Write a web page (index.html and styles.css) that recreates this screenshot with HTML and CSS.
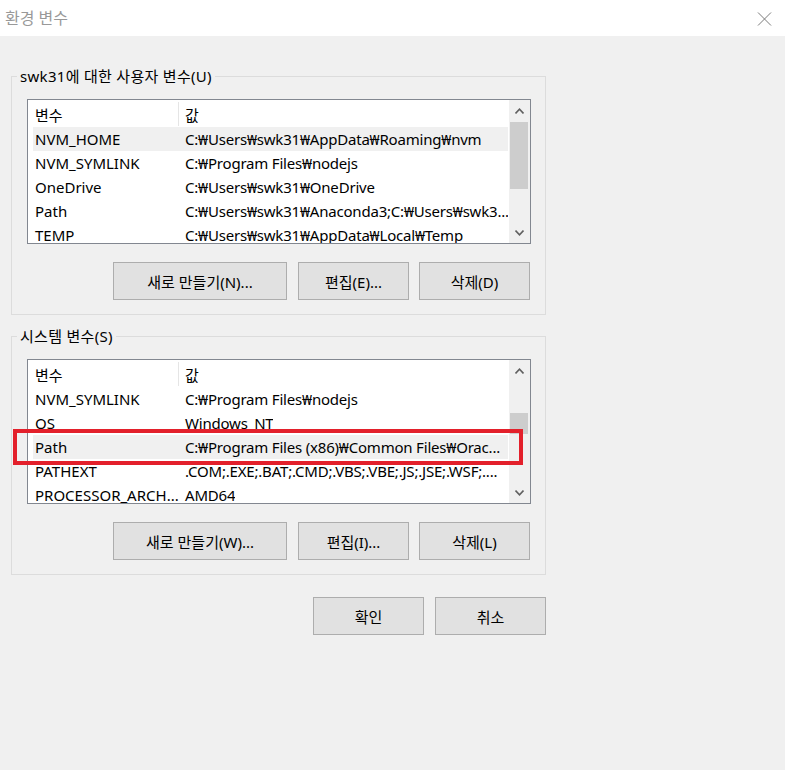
FILE: index.html
```
<!DOCTYPE HTML>
<html>
	<head>
		<meta http-equiv="Content-Type" content="text/html; charset=UTF-8" />
		<title>환경 변수</title>
		<link rel="stylesheet" href="styles.css">
	</head>
	<body>
		<div class="title_bar">
			<span class="title">환경 변수</span>
			<svg class="close" width="15" height="14" viewBox="0 0 15 14">
				<path d="M1 0.5 L14 13.5 M14 0.5 L1 13.5" stroke="#7a7a7a" stroke-width="1" fill="none"/>
			</svg>
		</div>
		<div class="dialog">
			<fieldset class="group">
				<legend>swk31에 대한 사용자 변수(U)</legend>
				<div class="group_body">
					<div class="list">
						<div class="rows">
							<div class="row row--head"><span class="c1">변수</span><span class="c2">값</span></div>
							<div class="row row--hover"><span class="c1">NVM_HOME</span><span class="c2">C:₩Users₩swk31₩AppData₩Roaming₩nvm</span></div>
							<div class="row"><span class="c1">NVM_SYMLINK</span><span class="c2">C:₩Program Files₩nodejs</span></div>
							<div class="row"><span class="c1">OneDrive</span><span class="c2">C:₩Users₩swk31₩OneDrive</span></div>
							<div class="row"><span class="c1">Path</span><span class="c2">C:₩Users₩swk31₩Anaconda3;C:₩Users₩swk3...</span></div>
							<div class="row"><span class="c1">TEMP</span><span class="c2">C:₩Users₩swk31₩AppData₩Local₩Temp</span></div>
						</div>
						<div class="scrollbar">
							<div class="arrow"><svg width="9" height="6" viewBox="0 0 9 6"><path d="M0.5 5.5 L4.5 1.2 L8.5 5.5" stroke="#606060" stroke-width="1.6" fill="none"/></svg></div>
							<div class="track"><div class="thumb thumb--user"></div></div>
							<div class="arrow"><svg width="9" height="6" viewBox="0 0 9 6"><path d="M0.5 0.5 L4.5 4.8 L8.5 0.5" stroke="#606060" stroke-width="1.6" fill="none"/></svg></div>
						</div>
					</div>
					<div class="buttons">
						<div class="btn btn--wide">새로 만들기(N)...</div>
						<div class="btn">편집(E)...</div>
						<div class="btn">삭제(D)</div>
					</div>
				</div>
			</fieldset>

			<fieldset class="group group--system">
				<legend>시스템 변수(S)</legend>
				<div class="group_body">
					<div class="list">
						<div class="rows">
							<div class="row row--head"><span class="c1">변수</span><span class="c2">값</span></div>
							<div class="row"><span class="c1">NVM_SYMLINK</span><span class="c2">C:₩Program Files₩nodejs</span></div>
							<div class="row"><span class="c1">OS</span><span class="c2">Windows_NT</span></div>
							<div class="row row--hover"><span class="c1">Path</span><span class="c2">C:₩Program Files (x86)₩Common Files₩Orac...</span></div>
							<div class="row"><span class="c1">PATHEXT</span><span class="c2">.COM;.EXE;.BAT;.CMD;.VBS;.VBE;.JS;.JSE;.WSF;....</span></div>
							<div class="row"><span class="c1">PROCESSOR_ARCH...</span><span class="c2">AMD64</span></div>
						</div>
						<div class="scrollbar">
							<div class="arrow"><svg width="9" height="6" viewBox="0 0 9 6"><path d="M0.5 5.5 L4.5 1.2 L8.5 5.5" stroke="#606060" stroke-width="1.6" fill="none"/></svg></div>
							<div class="track"><div class="thumb thumb--system"></div></div>
							<div class="arrow"><svg width="9" height="6" viewBox="0 0 9 6"><path d="M0.5 0.5 L4.5 4.8 L8.5 0.5" stroke="#606060" stroke-width="1.6" fill="none"/></svg></div>
						</div>
						<!-- annotation round the Path row -->
						<div class="mark"></div>
					</div>
					<div class="buttons">
						<div class="btn btn--wide">새로 만들기(W)...</div>
						<div class="btn">편집(I)...</div>
						<div class="btn">삭제(L)</div>
					</div>
				</div>
			</fieldset>

			<div class="buttons buttons--dialog">
				<div class="btn">확인</div>
				<div class="btn">취소</div>
			</div>
		</div>
	</body>
</html>
```

FILE: styles.css
```
body {
	margin: 0;
	background: #f0f0f0;
	font-family: "Noto Sans", "Noto Sans CJK KR", sans-serif;
	font-size: 15px;
	color: #000;
}
.title_bar {
	height: 36px;
	background: #fff;
	display: flex;
	align-items: center;
	justify-content: space-between;
	padding: 0 13px 0 5px;
}
.title {
	color: #999;
	font-size: 16px;
	line-height: 20px;
}
.close {
	display: block;
	margin-top: 1px;
}
.dialog {
	padding-left: 11px;
}
.group {
	box-sizing: border-box;
	width: 535px;
	margin: 29px 0 0 0;
	padding: 0;
	min-width: 0;
	border: 1px solid #dcdcdc;
}
.group--system {
	margin-top: 10px;
}
.group legend {
	margin-left: 5px;
	padding: 0 3px;
	line-height: 22px;
	letter-spacing: 0.3px;
}
.group_body {
	padding: 12px 15px 14px 15px;
}
.list {
	position: relative;
	display: flex;
	box-sizing: border-box;
	width: 504px;
	height: 145px;
	margin-right: -1px;
	border: 1px solid #828790;
	background: #fff;
}
.rows {
	flex: 1;
	overflow: hidden;
}
.row {
	display: flex;
	align-items: center;
	height: 24px;
	margin: 0 1px 0 5px;
	white-space: nowrap;
}
.row--head {
	height: 27px;
	align-items: stretch;
}
.row--hover {
	background: #f0f0f0;
}
.c1 {
	box-sizing: border-box;
	width: 146px;
	flex-shrink: 0;
	padding-left: 2px;
	overflow: hidden;
}
.c2 {
	padding-left: 6px;
	overflow: hidden;
	letter-spacing: -0.2px;
}
.row--head .c1,
.row--head .c2 {
	display: flex;
	align-items: center;
	margin: 2px 0 1px 0;
}
.row--head .c1 {
	border-right: 1px solid #e5e5e5;
}
.scrollbar {
	width: 21px;
	display: flex;
	flex-direction: column;
	background: #f0f0f0;
}
.arrow {
	height: 21px;
	display: flex;
	align-items: center;
	justify-content: center;
}
.arrow svg {
	display: block;
}
.track {
	flex: 1;
}
.thumb {
	margin: 0 2px 0 1px;
	background: #cdcdcd;
}
.thumb--user {
	margin-top: 1px;
	height: 67px;
}
.thumb--system {
	margin-top: 32px;
	height: 21px;
}
.mark {
	position: absolute;
	left: -15px;
	top: 69px;
	width: 510px;
	height: 36px;
	box-sizing: border-box;
	border: 4px solid #e3202b;
}
.buttons {
	display: flex;
	justify-content: flex-end;
	gap: 10px;
	margin-top: 18px;
}
.btn {
	box-sizing: border-box;
	width: 111px;
	height: 38px;
	display: flex;
	align-items: center;
	justify-content: center;
	background: #e1e1e1;
	border: 1px solid #adadad;
	white-space: nowrap;
}
.btn--wide {
	width: 174px;
	margin-right: 1px;
}
.buttons--dialog {
	width: 535px;
	gap: 11px;
	margin-top: 22px;
}
```
